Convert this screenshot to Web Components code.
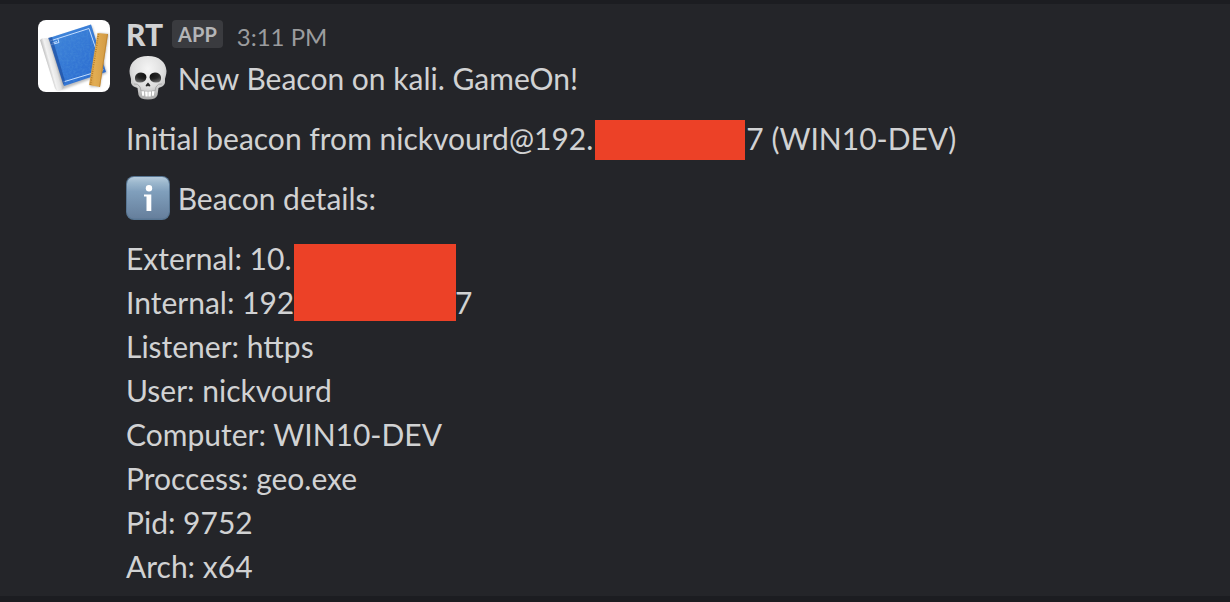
<!DOCTYPE html>
<html lang="en">
<head>
<meta charset="utf-8">
<title>RT message</title>
<style>
  html { background: #1c1d21; }
  body { margin: 0; font-family: Lato, "Liberation Sans", sans-serif; color: #d1d2d3; }
</style>
</head>
<body>
<template id="message-tpl">
  <style>
    :host { display: block; padding: 4px 0 6px; }
    article { display: flex; gap: 16px; padding: 9px 38px 8px; background: #242529; }
    .avatar { flex: none; padding-top: 7px; }
    .body { flex: 1; min-width: 0; font-size: 30px; line-height: 44px; }
    header { height: 43px; line-height: 42px; }
  </style>
  <article>
    <div class="avatar"><slot name="avatar"></slot></div>
    <div class="body">
      <header><slot name="header"></slot></header>
      <slot></slot>
    </div>
  </article>
</template>

<template id="sender-tpl">
  <style>
    :host { display: flex; align-items: baseline; }
    b { font-weight: 900; }
    .badge { align-self: flex-start; margin: 7px 14px 0 9px; padding: 0 6px; border-radius: 4px; background: #3a3b3f;
      color: #b4b5b7; font-size: 20px; line-height: 28px; font-weight: 700; }
    time { color: #9b9c9e; font-size: 24px; }
  </style>
  <b><slot></slot></b><span class="badge"><slot name="badge"></slot></span><time><slot name="time"></slot></time>
</template>

<template id="avatar-tpl">
  <style>:host, svg { display: block; width: 72px; height: 72px; }</style>
  <svg viewBox="0 0 72 72" role="img" aria-label="RT avatar">
    <defs>
      <linearGradient id="paper" x2="1" y2="1"><stop stop-color="#4187db"/><stop offset="1" stop-color="#2868cf"/></linearGradient>
      <linearGradient id="roll" gradientUnits="userSpaceOnUse" x1="9" y1="45" x2="20" y2="42"><stop stop-color="#bdbdbd"/><stop offset=".3" stop-color="#f2f2f2"/><stop offset=".65" stop-color="#e2e2e2"/><stop offset="1" stop-color="#a2a2a2"/></linearGradient>
      <linearGradient id="wood"><stop stop-color="#d79b3f"/><stop offset=".3" stop-color="#e2ad53"/><stop offset="1" stop-color="#d29a43"/></linearGradient>
      <filter id="soft" x="-20%" y="-20%" width="140%" height="140%"><feGaussianBlur stdDeviation="1.3"/></filter>
      <filter id="grain"><feTurbulence type="fractalNoise" baseFrequency=".45" numOctaves="2" seed="4"/><feColorMatrix values="0 0 0 0 .08  0 0 0 0 .3  0 0 0 0 .7  0 0 0 1.3 -.45"/></filter>
      <clipPath id="sheet"><path d="M11 18 53 4.5 68 52 26 66Z"/></clipPath>
      <clipPath id="frame"><rect width="72" height="72" rx="8"/></clipPath>
    </defs>
    <g clip-path="url(#frame)">
      <rect width="72" height="72" fill="#fff"/>
      <path d="M4 21 12 19 54 6 69 53 26 69 19 70Z" fill="#888" opacity=".55" filter="url(#soft)"/>
      <path d="M11 18 53 4.500 68 52 26 66Z" fill="url(#paper)"/>
      <rect width="72" height="72" filter="url(#grain)" clip-path="url(#sheet)" opacity=".6"/>
      <path d="M12 21 51 8.500 65 50 25 62M12 25l9-2.500-1.300-4M14 23l5-1.500" fill="none" stroke="#c4deff" stroke-width="1"/>
      <path d="M10 18 14 17 27 61 25 66Z" fill="#1c4c9e" opacity=".65"/>
      <path d="M2 20Q4 17.500 7 18Q10 18 11 20L25 64Q27 69 23 70Q19 72 17 68Z" fill="url(#roll)"/>
      <path d="M60 13 71 14 62 67 52 67Z" fill="#777" opacity=".45" filter="url(#soft)"/>
      <path d="M59.500 13 70 14 62 67 51 65Z" fill="url(#wood)"/>
      <path d="M60.500 14 52.500 65" stroke="#a56e20" stroke-width="1.500" stroke-dasharray=".7 1.500"/>
      <path d="M69.500 14 61.500 67" stroke="#bc8330" stroke-width=".8"/>
    </g>
  </svg>
</template>

<template id="skull-tpl">
  <style>:host { display: inline-block; width: 44px; height: 44px; vertical-align: top; } svg { display: block; }</style>
  <svg width="44" height="44" viewBox="0 0 44 44" role="img" aria-label="Skull">
    <defs>
      <radialGradient id="bone" cx=".5" cy=".3" r=".7"><stop stop-color="#f5f5f5"/><stop offset=".6" stop-color="#dedede"/><stop offset="1" stop-color="#a8a8a8"/></radialGradient>
      <radialGradient id="eye" cx=".5" cy=".3" r=".8"><stop stop-color="#0c0c0c"/><stop offset=".5" stop-color="#242424"/><stop offset="1" stop-color="#777"/></radialGradient>
    </defs>
    <path d="M22 0C33 0 40 6 40.500 15C40.700 19 38.500 22 39 25C39.500 29 36 31 32.500 32L31.500 39Q30 43.500 22 43.500Q14 43.500 12.500 39L11.500 32C8 31 4.500 29 5 25C5.500 22 3.300 19 3.500 15C4 6 11 0 22 0Z" fill="url(#bone)"/>
    <path d="M8 28Q12 27 14 31L15 35M36 28Q32 27 30 31L29 35" fill="none" stroke="#aaa" stroke-width="1"/>
    <path d="M9 21Q10 16.500 15 16.500Q20.500 17 20.500 21.500Q19.500 26.500 14 26.500Q8 26.500 9 21ZM35 21Q34 16.500 29 16.500Q23.500 17 23.500 21.500Q24.500 26.500 30 26.500Q36 26.500 35 21Z" fill="url(#eye)"/>
    <path d="M22 26.500Q24 28 24.500 30Q23 31 22 29.800Q21 31 19.500 30Q20 28 22 26.500Z" fill="#292929"/>
    <path d="M14.500 34Q22 36 29.500 34L28.500 40Q22 42 15.500 40Z" fill="#b0b0b0"/>
    <path d="M15.500 35.200h2.700v4.600h-2zM19 35.500h2.700v5h-2.200zM22.400 35.500h2.700l-.4 5h-2.300zM25.900 35.200h2.700l-.8 4.600h-1.900z" fill="#fff"/>
  </svg>
</template>

<template id="info-tpl">
  <style>:host { display: inline-block; width: 44px; height: 44px; vertical-align: top; } svg { display: block; }</style>
  <svg width="44" height="44" viewBox="0 0 44 44" role="img" aria-label="Information">
    <defs><linearGradient id="face" x2="0" y2="1"><stop stop-color="#b5cbdc"/><stop offset=".14" stop-color="#9bb7cd"/><stop offset=".35" stop-color="#809fbc"/><stop offset="1" stop-color="#667f9c"/></linearGradient></defs>
    <rect width="44" height="44" rx="8" fill="#587693"/>
    <rect x="1" y="1" width="42" height="41.500" rx="7" fill="url(#face)"/>
    <circle cx="23" cy="12.300" r="3.200" fill="#fff"/>
    <path d="M18 18.500h7.300v16.500h-4.800V20.500H18Z" fill="#fff"/>
  </svg>
</template>

<template id="para-tpl">
  <style>:host { display: block; } p { margin: 0; }</style>
  <p><slot></slot></p>
</template>

<template id="bar-tpl">
  <style>:host { display: inline-block; width: 150px; height: 40px; margin: 0 1px 0 2px; vertical-align: bottom; background: #ec4127; }</style>
</template>

<template id="details-tpl">
  <style>
    :host { display: block; position: relative; }
    .mask { position: absolute; left: 168px; top: 8px; width: 162px; height: 77px; background: #ec4127; }
  </style>
  <slot></slot><div class="mask"></div>
</template>

<template id="row-tpl">
  <style>
    :host { display: flex; white-space: pre; }
    .lead { min-width: var(--lead, 0); }
  </style>
  <span class="lead"><slot></slot></span><slot name="tail"></slot>
</template>

<style>
  message-paragraph { margin-bottom: 16px; }
  .internal { --lead: 329px; }
</style>

<chat-message>
  <app-avatar slot="avatar"></app-avatar>
  <message-sender slot="header">RT<span slot="badge">APP</span><span slot="time">3:11 PM</span></message-sender>
  <message-paragraph><emoji-skull></emoji-skull> New Beacon on kali. GameOn!</message-paragraph>
  <message-paragraph>Initial beacon from nickvourd@192.<redacted-bar></redacted-bar>7 (WIN10-DEV)</message-paragraph>
  <message-paragraph><emoji-info></emoji-info> Beacon details:</message-paragraph>
  <beacon-details>
    <detail-row>External: 10.</detail-row>
    <detail-row class="internal">Internal: 192<span slot="tail">7</span></detail-row>
    <detail-row>Listener: https</detail-row>
    <detail-row>User: nickvourd</detail-row>
    <detail-row>Computer: WIN10-DEV</detail-row>
    <detail-row>Proccess: geo.exe</detail-row>
    <detail-row>Pid: 9752</detail-row>
    <detail-row>Arch: x64</detail-row>
  </beacon-details>
</chat-message>

<script>
  class TemplateElement extends HTMLElement {
    constructor() {
      super();
      const template = document.getElementById(this.constructor.template);
      this.attachShadow({ mode: "open" }).append(template.content.cloneNode(true));
    }
  }
  customElements.define("chat-message", class ChatMessage extends TemplateElement { static template = "message-tpl"; });
  customElements.define("message-sender", class MessageSender extends TemplateElement { static template = "sender-tpl"; });
  customElements.define("app-avatar", class AppAvatar extends TemplateElement { static template = "avatar-tpl"; });
  customElements.define("emoji-skull", class EmojiSkull extends TemplateElement { static template = "skull-tpl"; });
  customElements.define("emoji-info", class EmojiInfo extends TemplateElement { static template = "info-tpl"; });
  customElements.define("message-paragraph", class MessageParagraph extends TemplateElement { static template = "para-tpl"; });
  customElements.define("redacted-bar", class RedactedBar extends TemplateElement { static template = "bar-tpl"; });
  customElements.define("beacon-details", class BeaconDetails extends TemplateElement { static template = "details-tpl"; });
  customElements.define("detail-row", class DetailRow extends TemplateElement { static template = "row-tpl"; });
</script>
</body>
</html>
